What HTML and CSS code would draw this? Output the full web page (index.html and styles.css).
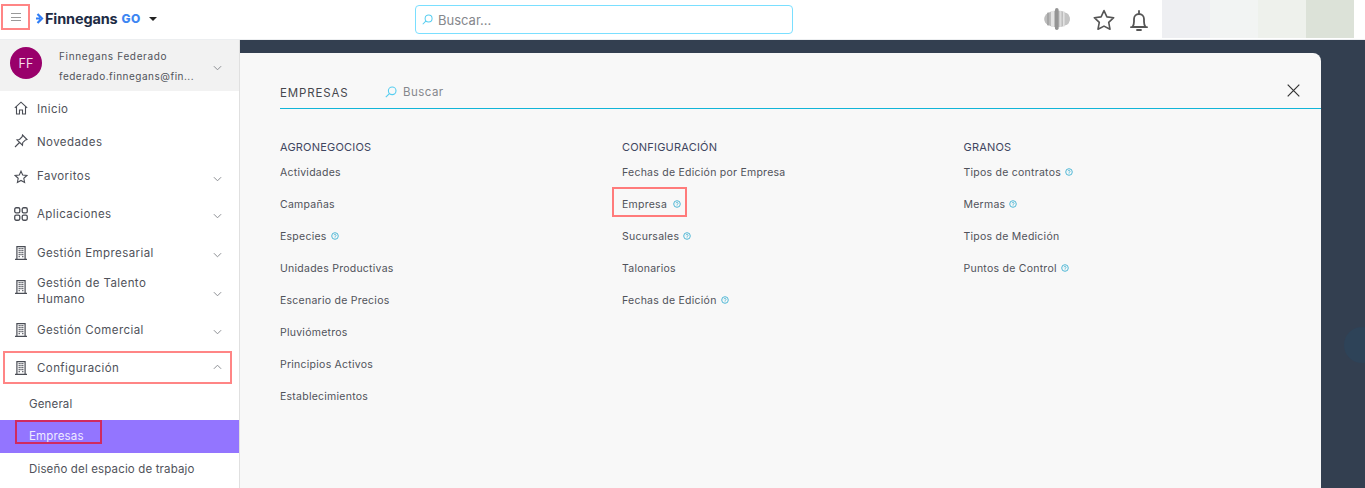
FILE: index.html
```html
<!DOCTYPE html>
<html lang="es">
<head>
<meta charset="utf-8">
<title>Finnegans GO</title>
<link rel="stylesheet" href="styles.css">
</head>
<body>
<svg class="defs" width="0" height="0" aria-hidden="true">
  <symbol id="building" viewBox="0 0 12 14"><path d="M1.900 13.300V.7h8.200v12.600M0 13.300h12" fill="none" stroke="currentColor" stroke-width="1.200"/><path d="M3.600 2.600h1.200M5.400 2.600h1.200M7.200 2.600h1.200M3.600 4.600h1.200M5.400 4.600h1.200M7.200 4.600h1.200M3.600 6.600h1.200M5.400 6.600h1.200M7.200 6.600h1.200M3.600 8.600h1.200M5.400 8.600h1.200M7.200 8.600h1.200M3.600 10.600h1.200M7.200 10.600h1.200" fill="none" stroke="currentColor" stroke-width="1.200"/></symbol>
  <symbol id="chev" viewBox="0 0 10 6"><path d="M1 1l4 4 4-4" fill="none" stroke="currentColor" stroke-width="1.100"/></symbol>
  <symbol id="help" viewBox="0 0 8 8"><circle cx="4" cy="4" r="3.300" fill="none" stroke="currentColor" stroke-width=".9"/><path d="M2.900 3.200C3 2.200 5.100 2.200 5.100 3.300 5.100 4.100 4 4 4 4.900M4 5.500v.6" fill="none" stroke="currentColor" stroke-width=".8"/></symbol>
  <symbol id="lens" viewBox="0 0 12 12"><circle cx="7.200" cy="4.800" r="3.800" fill="none" stroke="currentColor" stroke-width="1.100"/><path d="M4.400 7.600L.8 11.200" fill="none" stroke="currentColor" stroke-width="1.100"/></symbol>
</svg>

<header class="topbar">
  <div class="top-left">
    <button class="burger" type="button" aria-label="Menú"><span></span><span></span><span></span></button>
    <div class="logo">
      <svg class="logo-mark" viewBox="0 0 8 11"><path d="M1.500 1l4.500 4.500L1.500 10M0 5.500h4" fill="none" stroke="#2f7df6" stroke-width="2.200"/></svg>
      <span class="logo-name">Finnegans</span><span class="logo-go">GO</span>
      <span class="logo-caret"></span>
    </div>
  </div>
  <div class="top-search">
    <svg class="lens"><use href="#lens"/></svg>
    <span>Buscar...</span>
  </div>
  <div class="top-right">
    <svg class="orb" viewBox="0 0 26 22"><ellipse cx="13" cy="11" rx="12.800" ry="8.500" fill="#bdbdbd"/><ellipse cx="22" cy="11" rx="3.600" ry="6" fill="#c4c4c4"/><rect x="7" y="3" width="3" height="16" fill="#e4e4e4"/><rect x="15.500" y="3" width="2" height="16" fill="#dcdcdc"/><rect x="19" y="3.500" width="1.600" height="15" fill="#e2e2e2"/><rect x="11" y="0" width="3.600" height="22" rx="1.800" fill="#949494"/><rect x="3" y="4.500" width="2.200" height="13" rx="1.100" fill="#a6a6a6"/></svg>
    <svg class="star" viewBox="0 0 22 21"><path d="M11 1.600l2.900 6.300 6.800.8-5 4.700 1.300 6.800L11 17.100l-6 3.100 1.300-6.800-5-4.700 6.800-.8z" fill="none" stroke="#555" stroke-width="1.600" stroke-linejoin="round"/></svg>
    <svg class="bell" viewBox="0 0 18 22"><path d="M2.500 17c1.200-1.400 1.500-3 1.500-5.500V9a5 5 0 0110 0v2.500c0 2.500.3 4.100 1.500 5.500zM1 17.200h16M9 1v3M7 20h4" fill="none" stroke="#555" stroke-width="1.800" stroke-linecap="round"/></svg>
    <div class="swatches"><i class="sw1"></i><i class="sw2"></i><i class="sw3"></i><i class="sw4"></i></div>
  </div>
</header>

<div class="layout">
  <aside class="sidebar">
    <div class="user">
      <div class="avatar">FF</div>
      <div class="user-text">
        <div class="user-name">Finnegans Federado</div>
        <div class="user-mail">federado.finnegans@fin...</div>
      </div>
      <svg class="chev"><use href="#chev"/></svg>
    </div>
    <nav>
      <a class="nav h34">
        <svg class="ico" viewBox="0 0 14 14"><path d="M.8 6.800L7 1.200l6.200 5.600M2.500 5.800V13h3V9h3v4h3V5.800" fill="none" stroke="currentColor" stroke-width="1.100"/></svg>
        <span class="lbl narrow low">Inicio</span>
      </a>
      <a class="nav h33 raise">
        <svg class="ico" viewBox="0 0 14 14"><path d="M8.500 1L13 5.500l-1.500.4-2.800 2.800-.2 2.500L3 5.800l2.500-.3 2.700-2.800zM5.500 8.500L1 13" fill="none" stroke="currentColor" stroke-width="1.100"/></svg>
        <span class="lbl narrow">Novedades</span>
      </a>
      <a class="nav h37">
        <svg class="ico" viewBox="0 0 14 14"><path d="M7 1.200l1.700 3.800 4.100.5-3 2.800.8 4.100L7 10.400l-3.600 2 .8-4.100-3-2.800 4.100-.5z" fill="none" stroke="currentColor" stroke-width="1.100"/></svg>
        <span class="lbl up">Favoritos</span>
        <svg class="chev"><use href="#chev"/></svg>
      </a>
      <a class="nav h38">
        <svg class="ico" viewBox="0 0 15 15"><rect x=".8" y=".8" width="5.400" height="5.400" rx="1.500" fill="none" stroke="currentColor" stroke-width="1.400"/><rect x="8.800" y=".8" width="5.400" height="5.400" rx="1.500" fill="none" stroke="currentColor" stroke-width="1.400"/><rect x=".8" y="8.800" width="5.400" height="5.400" rx="1.500" fill="none" stroke="currentColor" stroke-width="1.400"/><rect x="8.800" y="8.800" width="5.400" height="5.400" rx="1.500" fill="none" stroke="currentColor" stroke-width="1.400"/></svg>
        <span class="lbl">Aplicaciones</span>
        <svg class="chev"><use href="#chev"/></svg>
      </a>
      <a class="nav h39">
        <svg class="ico tall"><use href="#building"/></svg>
        <span class="lbl">Gestión Empresarial</span>
        <svg class="chev"><use href="#chev"/></svg>
      </a>
      <a class="nav h39 double">
        <svg class="ico tall"><use href="#building"/></svg>
        <span class="lbl two">Gestión de Talento Humano</span>
        <svg class="chev"><use href="#chev"/></svg>
      </a>
      <a class="nav h38">
        <svg class="ico tall"><use href="#building"/></svg>
        <span class="lbl">Gestión Comercial</span>
        <svg class="chev"><use href="#chev"/></svg>
      </a>
      <a class="nav h38 marked">
        <svg class="ico tall"><use href="#building"/></svg>
        <span class="lbl">Configuración</span>
        <svg class="chev up"><use href="#chev"/></svg>
      </a>
      <a class="sub">General</a>
      <a class="sub active">Empresas<i class="mark-dark"></i></a>
      <a class="sub">Diseño del espacio de trabajo</a>
    </nav>
  </aside>

  <main class="stage">
    <section class="panel">
      <div class="panel-head">
        <h1>EMPRESAS</h1>
        <div class="panel-search">
          <svg class="lens"><use href="#lens"/></svg>
          <span>Buscar</span>
        </div>
        <svg class="close" viewBox="0 0 13 13"><path d="M.7.700l11.600 11.600M12.300.700L.7 12.300" stroke="#333" stroke-width="1.200" fill="none"/></svg>
      </div>
      <div class="columns">
        <div class="col">
          <h2>AGRONEGOCIOS</h2>
          <a>Actividades</a>
          <a>Campañas</a>
          <a>Especies<svg class="help"><use href="#help"/></svg></a>
          <a>Unidades Productivas</a>
          <a>Escenario de Precios</a>
          <a>Pluviómetros</a>
          <a>Principios Activos</a>
          <a>Establecimientos</a>
        </div>
        <div class="col">
          <h2>CONFIGURACIÓN</h2>
          <a>Fechas de Edición por Empresa</a>
          <a class="marked-item"><span class="mark-box">Empresa<svg class="help"><use href="#help"/></svg></span></a>
          <a>Sucursales<svg class="help"><use href="#help"/></svg></a>
          <a>Talonarios</a>
          <a>Fechas de Edición<svg class="help"><use href="#help"/></svg></a>
        </div>
        <div class="col">
          <h2>GRANOS</h2>
          <a>Tipos de contratos<svg class="help"><use href="#help"/></svg></a>
          <a>Mermas<svg class="help"><use href="#help"/></svg></a>
          <a>Tipos de Medición</a>
          <a>Puntos de Control<svg class="help"><use href="#help"/></svg></a>
        </div>
      </div>
    </section>
    <div class="float-dot"></div>
  </main>
</div>
</body>
</html>
```

FILE: styles.css
```css
* { box-sizing: border-box; }
html, body { margin: 0; height: 100%; overflow: hidden; }
body {
  font-family: "Inter", "Liberation Sans", sans-serif;
  color: #4c4f58;
  background: #fff;
  display: flex;
  flex-direction: column;
}
.defs { position: absolute; }
a { color: inherit; text-decoration: none; }

/* top bar */
.topbar {
  height: 40px;
  flex: none;
  display: flex;
  align-items: flex-start;
  background: #fff;
  border-bottom: 1px solid #eceef0;
}
.top-left { width: 415px; display: flex; align-items: center; height: 39px; }
.burger {
  margin: 0 0 5px 1px;
  width: 29px;
  height: 26px;
  padding: 0;
  border: 2px solid #ff8585;
  background: #fff;
  display: flex;
  flex-direction: column;
  align-items: center;
  justify-content: center;
  gap: 2.500px;
}
.burger span { width: 10px; height: 1px; background: #9a9a9a; }
.logo { margin: 0 0 3px 6px; display: flex; align-items: center; }
.logo-mark { width: 8px; height: 11px; margin-right: 1px; }
.logo-name { font-family: "Inter", sans-serif; font-weight: 700; font-size: 14.500px; color: #1d2b44; letter-spacing: -.15px; }
.logo-go { font-family: "Inter", sans-serif; font-weight: 800; font-size: 12px; color: #3d86f2; margin-left: 4px; letter-spacing: .4px; }
.logo-caret { margin: 2px 0 0 8px; border: 4px solid transparent; border-top: 4px solid #222; border-bottom: 0; }
.top-search {
  margin-top: 5px;
  width: 378px;
  height: 29px;
  border: 1px solid #7adfff;
  border-radius: 4px;
  display: flex;
  align-items: center;
  padding-left: 6px;
  font-size: 13px;
  color: #85878c;
}
.lens { width: 11px; height: 11px; color: #56cdf0; flex: none; margin-right: 5px; }
.top-right { flex: 1; display: flex; align-items: flex-start; padding-left: 251px; }
.orb { width: 26px; height: 22px; margin-top: 8px; }
.star { width: 22px; height: 21px; margin: 9px 0 0 23px; }
.bell { width: 18px; height: 22px; margin: 10px 0 0 15px; }
.swatches { display: flex; margin-left: 14px; height: 38px; }
.swatches i { display: block; width: 48px; }
.sw1 { background: #eeeff2; }
.sw2 { background: #f2f4f3; }
.sw3 { background: #eef1ec; }
.sw4 { background: #dce2d8; }

/* layout */
.layout { flex: 1; display: flex; min-height: 0; }
.sidebar { width: 240px; flex: none; background: #fff; border-right: 1px solid #e0e0e0; }
.user {
  height: 51px;
  background: #f2f2f2;
  display: flex;
  align-items: center;
  padding: 0 17px 0 10px;
}
.avatar {
  width: 32px;
  height: 32px;
  margin-top: -5px;
  border-radius: 50%;
  background: #99006b;
  color: #f6dcea;
  font-size: 12.500px;
  display: flex;
  align-items: center;
  justify-content: center;
  flex: none;
}
.user-text { flex: 1; margin-left: 17px; font-size: 10px; line-height: 20px; color: #50525a; white-space: nowrap; }
.user-name { letter-spacing: .65px; }
.user-mail { letter-spacing: .5px; }
.chev { width: 9px; height: 6px; color: #8b8d92; flex: none; }
.user .chev { margin-top: 4px; }

.nav { position: relative; display: flex; align-items: center; padding: 0 17px 0 14px; color: #50525a; }
.h33 { height: 33px; }
.h34 { height: 34px; }
.h37 { height: 37px; }
.h38 { height: 38px; }
.h39 { height: 39px; }
.ico { width: 14px; height: 14px; color: #4a4d55; flex: none; }
.ico.tall { width: 12px; height: 14px; margin: 0 1px; }
.raise .ico { margin-top: -2px; }
.double .ico.tall { margin-top: -9px; }
.lbl { flex: 1; margin-left: 9px; font-size: 11.500px; letter-spacing: .42px; line-height: 16px; }
.lbl.low { padding-top: 2px; }
.lbl.up { padding-bottom: 1px; }
.lbl.two { padding: 0 24px 2px 0; }
.nav .chev { margin-top: 4px; }
.nav .chev.up { transform: rotate(180deg); margin-top: -3px; }
.marked::after {
  content: "";
  position: absolute;
  left: 3px;
  right: 7px;
  top: 2px;
  bottom: 3px;
  border: 2px solid #ff8585;
  pointer-events: none;
}
.sub {
  position: relative;
  display: flex;
  align-items: center;
  height: 33px;
  padding-left: 29px;
  font-size: 11.500px;
  letter-spacing: .15px;
  color: #50525a;
}
.sub + .sub { padding-bottom: 1px; }
.sub.active { background: #9375ff; color: #efeaff; }
.mark-dark {
  position: absolute;
  left: 15px;
  top: 0;
  width: 87px;
  height: 24px;
  border: 2px solid #d02a5f;
}

/* stage */
.stage {
  position: relative;
  flex: 1;
  min-width: 0;
  background: #333f50;
  padding: 13px 44px 0 0;
  overflow: hidden;
}
.panel { height: 100%; background: #f8f8f8; border-radius: 0 8px 0 0; }
.panel-head {
  height: 56px;
  margin-left: 40px;
  padding-top: 22px;
  display: flex;
  align-items: center;
  border-bottom: 1px solid #12b5d8;
}
.panel-head h1 { margin: 2px 0 0; width: 105px; font-size: 11.500px; font-weight: 400; letter-spacing: .85px; color: #45474d; }
.panel-search { display: flex; align-items: center; font-size: 11.500px; color: #85878c; letter-spacing: .45px; flex: 1; }
.panel-search .lens { width: 12px; height: 12px; margin-right: 6px; }
.close { width: 13px; height: 13px; margin: -2px 21px 0 0; }
.columns { display: grid; grid-template-columns: 342px 341.500px 1fr; margin-left: 40px; padding-top: 25px; }
.col h2 { margin: 0; height: 22px; font-size: 11px; font-weight: 400; line-height: 26px; color: #3f4660; letter-spacing: .2px; }
.col a {
  display: flex;
  align-items: center;
  height: 32px;
  font-size: 10.500px;
  color: #50525a;
  letter-spacing: .25px;
  white-space: nowrap;
}
.help { width: 8px; height: 8px; margin-left: 4px; color: #3fb1d2; flex: none; }
.mark-box .help { margin-left: 6px; }
.marked-item { position: relative; }
.mark-box { display: flex; align-items: center; }
.mark-box::after {
  content: "";
  position: absolute;
  left: -10px;
  top: -1px;
  width: 71px;
  height: 26px;
  border: 2px solid #ff7b7b;
}
.float-dot {
  position: absolute;
  right: -15px;
  top: 287px;
  width: 36px;
  height: 36px;
  border-radius: 50%;
  background: #2e4358;
}
```
